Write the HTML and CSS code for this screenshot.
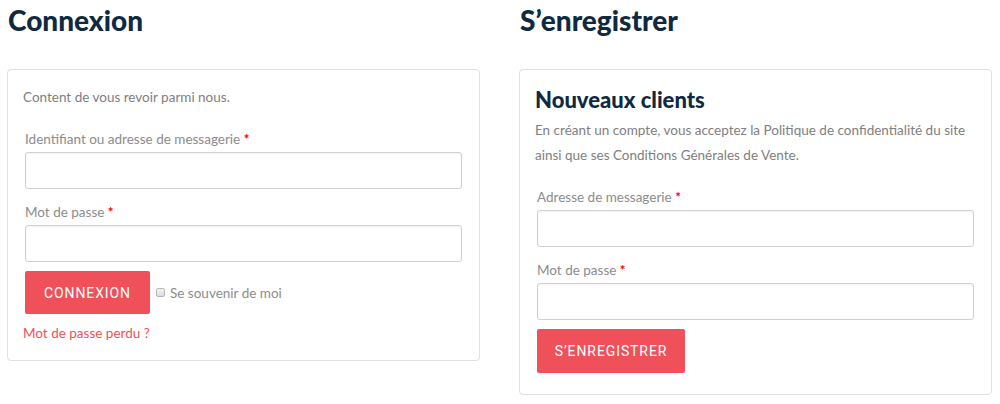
FILE: index.html
```html
<!DOCTYPE html>
<html lang="fr">
<head>
<meta charset="utf-8">
<title>Mon compte</title>
<link rel="stylesheet" href="styles.css">
</head>
<body>
<div class="columns">
  <section class="col">
    <h2 class="title">Connexion</h2>
    <div class="card card-login">
      <p class="intro">Content de vous revoir parmi nous.</p>
      <div class="row">
        <label class="label">Identifiant ou adresse de messagerie <span class="req">*</span></label>
        <input class="field" type="text">
      </div>
      <div class="row">
        <label class="label">Mot de passe <span class="req">*</span></label>
        <input class="field" type="password">
      </div>
      <div class="row actions">
        <button class="btn btn-login">Connexion</button>
        <label class="remember"><span class="check"></span>Se souvenir de moi</label>
      </div>
      <a class="lost" href="#">Mot de passe perdu ?</a>
    </div>
  </section>
  <section class="col">
    <h2 class="title">S’enregistrer</h2>
    <div class="card card-register">
      <h3 class="subtitle">Nouveaux clients</h3>
      <p class="text">En créant un compte, vous acceptez la Politique de confidentialité du site ainsi que ses Conditions Générales de Vente.</p>
      <div class="row">
        <label class="label">Adresse de messagerie <span class="req">*</span></label>
        <input class="field" type="email">
      </div>
      <div class="row">
        <label class="label">Mot de passe <span class="req">*</span></label>
        <input class="field" type="password">
      </div>
      <div class="row actions">
        <button class="btn btn-register">S’enregistrer</button>
      </div>
    </div>
  </section>
</div>
</body>
</html>
```

FILE: styles.css
```css
* { box-sizing: border-box; }
html, body { margin: 0; padding: 0; background: #fff; }
body {
  font-family: Lato, "Open Sans", sans-serif;
  font-size: 13.5px;
  color: #808080;
}
.columns {
  display: flex;
  gap: 39px;
  padding: 0 8px 0 7px;
}
.col { width: 473px; flex: none; }
.title {
  margin: 0 0 0 1px;
  font-family: Lato, sans-serif;
  font-weight: 900;
  font-size: 28px;
  line-height: 41px;
  color: #0f2a3f;
  height: 69px;
}
.card {
  border: 1px solid #e0e0e0;
  border-radius: 4px;
  padding: 15px 15px 0 15px;
}
.card-login { height: 292px; }
.card-register { height: 326px; }
.intro { margin: 0 0 17px; line-height: 25px; }
.subtitle {
  margin: 0;
  font-family: Lato, sans-serif;
  font-weight: 900;
  font-size: 22px;
  line-height: 30px;
  color: #0f2a3f;
}
.text { margin: 3px 0 17px; line-height: 25px; }
.row { padding: 0 2px; margin-bottom: 11px; }
.label { display: block; line-height: 25px; color: #8c8c8c; }
.req { color: #e00; font-weight: 700; }
.field {
  display: block;
  width: 100%;
  height: 37px;
  border: 1px solid #d0d0d0;
  border-radius: 3px;
  box-shadow: inset 0 1px 2px rgba(0,0,0,0.05);
  background: #fff;
  font: inherit;
  padding: 0 10px;
  margin: 0;
}
.actions { display: flex; align-items: center; margin-top: -2px; }
.btn {
  border: 0;
  border-radius: 2px;
  background: #ef5059;
  color: #fff;
  font-family: Roboto, "Open Sans", sans-serif;
  font-size: 14px;
  letter-spacing: 0.9px;
  text-transform: uppercase;
  height: 43px;
  padding: 0 16px;
  cursor: pointer;
}
.btn-login { width: 125px; }
.btn-register { width: 148px; height: 44px; }
.remember {
  display: flex;
  align-items: center;
  margin-left: 6px;
  font-size: 13.5px;
  color: #8c8c8c;
}
.check {
  width: 9px;
  height: 9px;
  border: 1px solid #b8b8b8;
  border-radius: 2px;
  background: linear-gradient(#f4f4f4, #dcdcdc);
  margin-right: 5px;
}
.lost {
  display: block;
  margin-top: -4px;
  color: #ef5059;
  text-decoration: none;
  line-height: 25px;
}
```
